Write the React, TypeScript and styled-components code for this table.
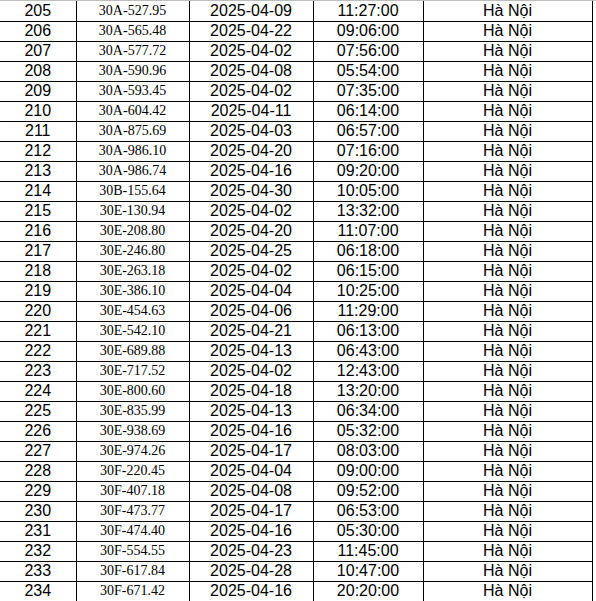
import styled, { createGlobalStyle } from 'styled-components';

const GlobalStyle = createGlobalStyle`
  html, body {
    margin: 0;
    padding: 0;
    background: #fff;
  }
`;

type Row = [number, string, string, string];

const rows: Row[] = [
  [205, '30A-527.95', '2025-04-09', '11:27:00'],
  [206, '30A-565.48', '2025-04-22', '09:06:00'],
  [207, '30A-577.72', '2025-04-02', '07:56:00'],
  [208, '30A-590.96', '2025-04-08', '05:54:00'],
  [209, '30A-593.45', '2025-04-02', '07:35:00'],
  [210, '30A-604.42', '2025-04-11', '06:14:00'],
  [211, '30A-875.69', '2025-04-03', '06:57:00'],
  [212, '30A-986.10', '2025-04-20', '07:16:00'],
  [213, '30A-986.74', '2025-04-16', '09:20:00'],
  [214, '30B-155.64', '2025-04-30', '10:05:00'],
  [215, '30E-130.94', '2025-04-02', '13:32:00'],
  [216, '30E-208.80', '2025-04-20', '11:07:00'],
  [217, '30E-246.80', '2025-04-25', '06:18:00'],
  [218, '30E-263.18', '2025-04-02', '06:15:00'],
  [219, '30E-386.10', '2025-04-04', '10:25:00'],
  [220, '30E-454.63', '2025-04-06', '11:29:00'],
  [221, '30E-542.10', '2025-04-21', '06:13:00'],
  [222, '30E-689.88', '2025-04-13', '06:43:00'],
  [223, '30E-717.52', '2025-04-02', '12:43:00'],
  [224, '30E-800.60', '2025-04-18', '13:20:00'],
  [225, '30E-835.99', '2025-04-13', '06:34:00'],
  [226, '30E-938.69', '2025-04-16', '05:32:00'],
  [227, '30E-974.26', '2025-04-17', '08:03:00'],
  [228, '30F-220.45', '2025-04-04', '09:00:00'],
  [229, '30F-407.18', '2025-04-08', '09:52:00'],
  [230, '30F-473.77', '2025-04-17', '06:53:00'],
  [231, '30F-474.40', '2025-04-16', '05:30:00'],
  [232, '30F-554.55', '2025-04-23', '11:45:00'],
  [233, '30F-617.84', '2025-04-28', '10:47:00'],
  [234, '30F-671.42', '2025-04-16', '20:20:00'],
];

// column widths in px, as measured from the sheet
const widths = [76, 113, 124, 110, 169];

const Sheet = styled.div`
  width: 596px;
  height: 601px;
  overflow: hidden;
  border-top: 1px solid #bdbdbd;
  box-sizing: border-box;
`;

const Table = styled.table`
  border-collapse: collapse;
  table-layout: fixed;
  width: 592px;
`;

const Col = styled.col<{ $w: number }>`
  width: ${(p) => p.$w}px;
`;

const Tr = styled.tr`
  height: 20px;
`;

const Cell = styled.td<{ $serif?: boolean }>`
  padding: 0;
  height: 19px;
  border: 1px solid #000;
  border-top: none;
  text-align: center;
  vertical-align: middle;
  color: #000;
  line-height: 18px;
  white-space: nowrap;
  font-family: ${(p) => (p.$serif ? '"Liberation Serif", "Times New Roman", serif' : '"Liberation Sans", Arial, sans-serif')};
  font-size: ${(p) => (p.$serif ? '14px' : '16px')};

  &:first-child {
    border-left: none;
  }
`;

export default function App() {
  return (
    <>
      <GlobalStyle />
      <Sheet>
        <Table>
          <colgroup>
            {widths.map((w, i) => (
              <Col key={i} $w={w} />
            ))}
          </colgroup>
          <tbody>
            {rows.map(([no, plate, date, time]) => (
              <Tr key={no}>
                <Cell>{no}</Cell>
                <Cell $serif>{plate}</Cell>
                <Cell>{date}</Cell>
                <Cell>{time}</Cell>
                <Cell>Hà Nội</Cell>
              </Tr>
            ))}
          </tbody>
        </Table>
      </Sheet>
    </>
  );
}
